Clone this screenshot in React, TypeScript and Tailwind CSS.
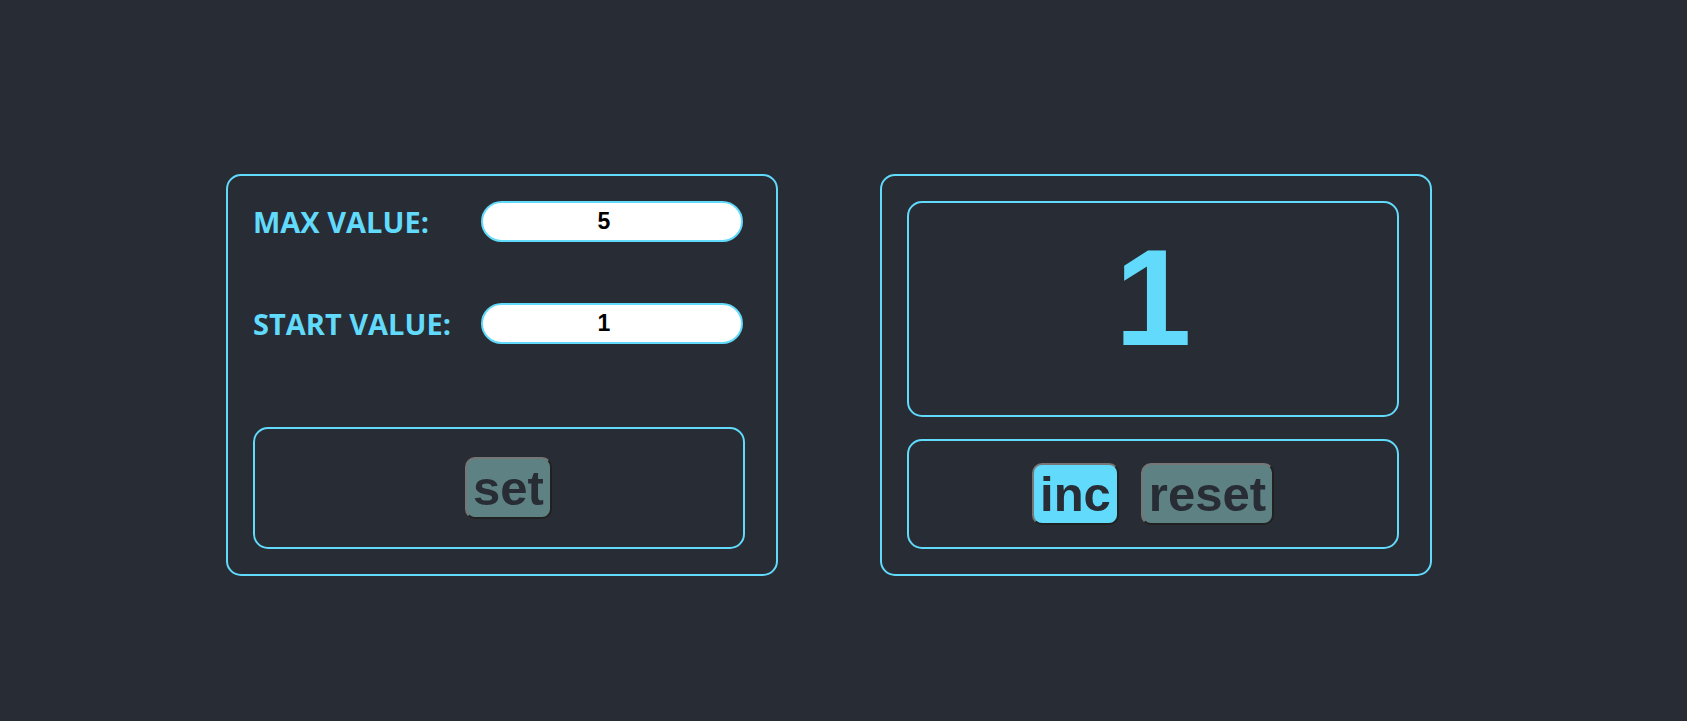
import { useState } from "react";

const btn =
  "px-[6px] py-[1px] border-2 [border-style:outset] border-[#767676] rounded-[10px] text-[49px] leading-[1.15] font-bold text-[#282c34] font-['Liberation_Sans',Arial,sans-serif]";

function Row({ label, value }: { label: string; value: number }) {
  return (
    <div className="flex items-center justify-between w-[490px]">
      <span className="text-[#61dafb] font-bold text-[29px] font-['Open_Sans',sans-serif] leading-none">
        {label}
      </span>
      <input
        readOnly
        value={value}
        className="w-[262px] h-[41px] rounded-full bg-white border-2 border-[#61dafb] pr-[16px] text-center text-black font-bold text-[23px] font-['Liberation_Sans',Arial,sans-serif] outline-none"
      />
    </div>
  );
}

export default function App() {
  const [max] = useState(5);
  const [start] = useState(1);
  const [count, setCount] = useState(1);

  return (
    <div className="h-screen w-full bg-[#282c34] flex items-center justify-center gap-[102px] pt-[29px] pr-[29px]">
      {/* Settings panel */}
      <div className="w-[552px] h-[402px] border-2 border-[#61dafb] rounded-[15px] pl-[25px] pt-[25px] flex flex-col">
        <Row label="MAX VALUE:" value={max} />
        <div className="h-[61px]" />
        <Row label="START VALUE:" value={start} />
        <div className="mt-[83px] w-[492px] h-[122px] border-2 border-[#61dafb] rounded-[15px] flex items-center justify-center">
          <button className={`${btn} ml-[19px] bg-[#5e8283]`}>set</button>
        </div>
      </div>

      {/* Counter panel */}
      <div className="w-[552px] h-[402px] border-2 border-[#61dafb] rounded-[15px] pl-[25px] pt-[25px] flex flex-col">
        <div className="w-[492px] h-[216px] border-2 border-[#61dafb] rounded-[15px] pt-[15px] text-center text-[138px] leading-[1.15] font-bold text-[#61dafb] font-['Liberation_Sans',Arial,sans-serif]">
          {count}
        </div>
        <div className="mt-[22px] w-[492px] h-[110px] border-2 border-[#61dafb] rounded-[15px] flex items-center justify-center gap-[22px]">
          <button
            className={`${btn} bg-[#61dafb]`}
            onClick={() => setCount((c) => (c < max ? c + 1 : c))}
          >
            inc
          </button>
          <button className={`${btn} bg-[#5e8283]`} onClick={() => setCount(start)}>
            reset
          </button>
        </div>
      </div>
    </div>
  );
}
